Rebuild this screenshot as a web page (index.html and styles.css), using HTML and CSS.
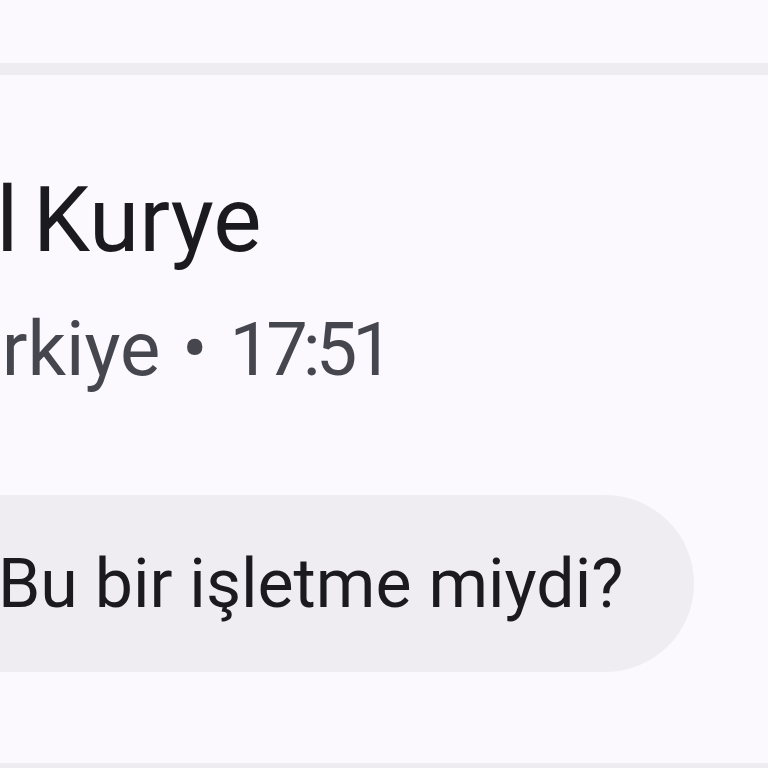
FILE: index.html
```html
<!DOCTYPE html>
<html lang="tr">
<head>
<meta charset="utf-8">
<link rel="stylesheet" href="styles.css">
</head>
<body>
<div class="screen">
  <div class="topbar"></div>
  <div class="divider"></div>
  <div class="content">
    <div class="title">Özel Kurye</div>
    <div class="meta">Türkiye • <span class="time">17:51</span></div>
    <div class="bubble-row">
      <div class="bubble">Bu bir işletme miydi?</div>
    </div>
  </div>
  <div class="bottom-line"></div>
</div>
</body>
</html>
```
FILE: styles.css
```css
html, body {
  margin: 0;
  padding: 0;
  background: #fbf8fe;
}
.screen {
  width: 768px;
  height: 768px;
  overflow: hidden;
  display: flex;
  flex-direction: column;
  font-family: Roboto, "Noto Sans", sans-serif;
  background: #fbf8fe;
}
.topbar {
  height: 63px;
  flex: none;
}
.divider {
  height: 12px;
  flex: none;
  background: #eeebf1;
}
.content {
  flex: 1;
  display: flex;
  flex-direction: column;
}
.title {
  font-size: 91px;
  line-height: 1;
  color: #1b1b1f;
  white-space: nowrap;
  word-spacing: -8px;
  margin-top: 100px;
  margin-left: -159px;
}
.meta {
  font-size: 76px;
  line-height: 1;
  word-spacing: 3px;
  color: #46464f;
  white-space: nowrap;
  margin-top: 45px;
  margin-left: -82px;
}
.time {
  font-size: 74px;
  letter-spacing: -5px;
}
.bubble-row {
  display: flex;
  margin-top: 108px;
}
.bubble {
  margin-left: -100px;
  height: 177px;
  padding: 0 71px 0 98px;
  border-radius: 89px;
  background: #efedf2;
  color: #1b1b1f;
  font-size: 68px;
  display: flex;
  align-items: center;
  white-space: nowrap;
}
.bottom-line {
  height: 5px;
  flex: none;
  background: #eeebf1;
}
```
